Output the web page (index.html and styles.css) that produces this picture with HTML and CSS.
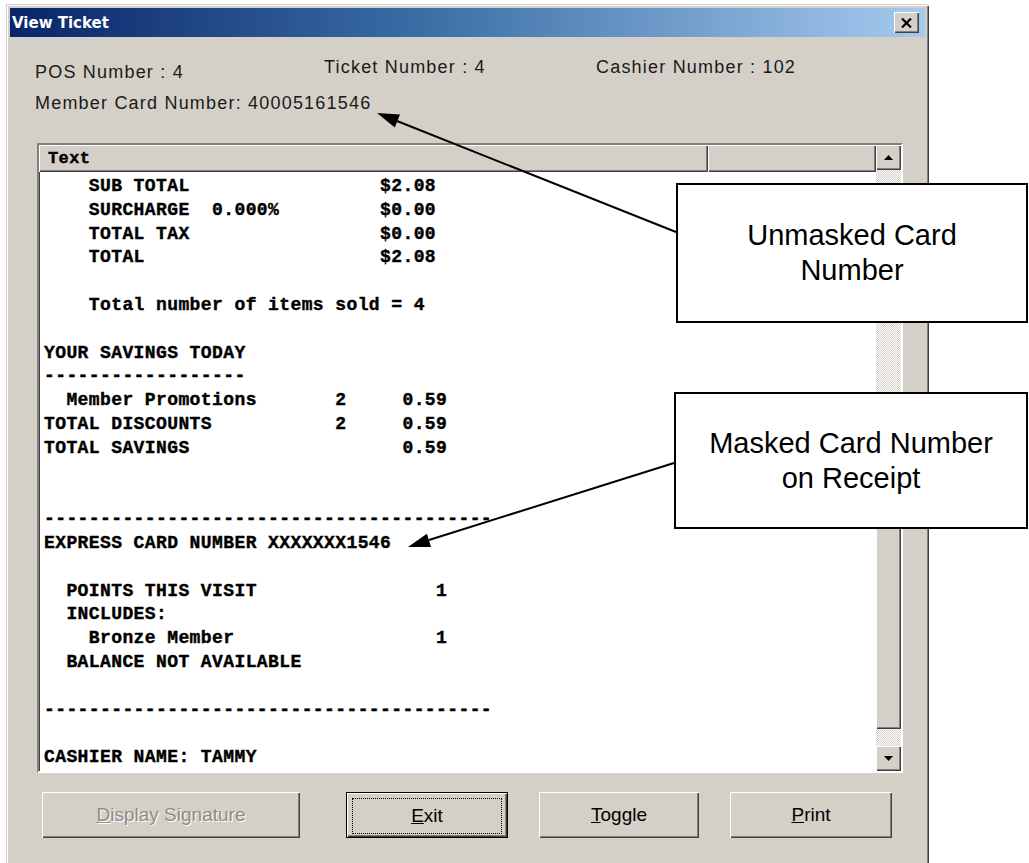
FILE: index.html
```html
<!DOCTYPE html>
<html lang="en">
<head>
<meta charset="utf-8">
<title>View Ticket</title>
<link rel="stylesheet" href="styles.css">
</head>
<body>
<div class="window">
  <div class="titlebar">
    <span class="title">View Ticket</span>
    <span class="close">
      <svg width="11" height="10" viewBox="0 0 11 10"><path d="M1 0.5 L10 9.5 M10 0.5 L1 9.5" stroke="#000" stroke-width="2.2" fill="none"/></svg>
    </span>
  </div>

  <div class="info-row">
    <span class="info pos">POS Number : 4</span>
    <span class="info ticket">Ticket Number : 4</span>
    <span class="info cashier">Cashier Number : 102</span>
  </div>
  <div class="info member">Member Card Number: 40005161546</div>

  <div class="listview">
    <div class="list-main">
      <div class="list-header">
        <div class="col col-text">Text</div>
        <div class="col col-extra"></div>
      </div>
<pre class="receipt">    SUB TOTAL                 $2.08
    SURCHARGE  0.000%         $0.00
    TOTAL TAX                 $0.00
    TOTAL                     $2.08

    Total number of items sold = 4

YOUR SAVINGS TODAY
------------------
  Member Promotions       2     0.59
TOTAL DISCOUNTS           2     0.59
TOTAL SAVINGS                   0.59


----------------------------------------
EXPRESS CARD NUMBER XXXXXXX1546

  POINTS THIS VISIT                1
  INCLUDES:
    Bronze Member                  1
  BALANCE NOT AVAILABLE

----------------------------------------

CASHIER NAME: TAMMY</pre>
    </div>
    <div class="scrollbar">
      <div class="sb-btn">
        <svg width="9" height="5" viewBox="0 0 9 5"><path d="M4.5 0 L9 5 L0 5 Z" fill="#000"/></svg>
      </div>
      <div class="sb-track upper"></div>
      <div class="sb-thumb"></div>
      <div class="sb-track lower"></div>
      <div class="sb-btn">
        <svg width="9" height="5" viewBox="0 0 9 5"><path d="M0 0 L9 0 L4.5 5 Z" fill="#000"/></svg>
      </div>
    </div>
  </div>

  <div class="buttons">
    <button class="btn btn-wide" disabled><u>D</u>isplay Signature</button>
    <button class="btn btn-default"><span class="focus"><u>E</u>xit</span></button>
    <button class="btn btn-toggle"><u>T</u>oggle</button>
    <button class="btn"><u>P</u>rint</button>
  </div>
</div>

<!-- annotation layer: leader arrows and callout boxes -->
<svg class="arrows" width="1029" height="863" viewBox="0 0 1029 863">
  <line x1="676" y1="232" x2="397" y2="121" stroke="#000" stroke-width="2"/>
  <polygon points="377,113 400,114.6 394.8,127.6" fill="#000"/>
  <line x1="674" y1="463" x2="429" y2="540" stroke="#000" stroke-width="2"/>
  <polygon points="408,547 431.1,547.1 426.9,533.7" fill="#000"/>
</svg>
<div class="callout callout-unmasked">Unmasked Card<br>Number</div>
<div class="callout callout-masked">Masked Card Number<br>on Receipt</div>
</body>
</html>
```
FILE: styles.css
```css
* {
  box-sizing: border-box;
}

body {
  margin: 0;
  width: 1029px;
  height: 863px;
  overflow: hidden;
  position: relative;
  background: #fff;
  font-family: "Liberation Sans", Arial, sans-serif;
}

/* dialog frame */
.window {
  margin: 4px 0 0 6px;
  width: 923px;
  height: 900px;
  padding: 4px;
  background: #d4d0c8;
  box-shadow:
    inset 1px 1px #d4d0c8,
    inset 2px 2px #fff,
    inset -1px -1px #404040,
    inset -2px -2px #808080;
}

.titlebar {
  height: 29px;
  display: flex;
  align-items: center;
  justify-content: space-between;
  padding: 0 6px 0 2px;
  background: linear-gradient(to right, #0a246a 0%, #3a6ea5 45%, #a6caf0 100%);
}

.title {
  color: #fff;
  font: bold 15px "DejaVu Sans", Verdana, sans-serif;
}

.close {
  width: 25px;
  height: 21px;
  display: flex;
  align-items: center;
  justify-content: center;
  background: #d4d0c8;
  box-shadow:
    inset 1px 1px #fff,
    inset -1px -1px #404040,
    inset -2px -2px #808080;
}

/* ticket info labels */
.info {
  font-size: 18px;
  line-height: 22px;
  letter-spacing: 1.2px;
  color: #1a1a1a;
}

.info-row {
  display: flex;
  align-items: flex-start;
  height: 22px;
  margin-top: 19px;
  padding-left: 25px;
}

.pos {
  width: 289px;
  padding-top: 5px;
}

.ticket {
  width: 272px;
}

.member {
  margin-top: 14px;
  padding-left: 25px;
}

/* list view with receipt text */
.listview {
  display: flex;
  margin: 29px 0 0 27px;
  width: 866px;
  height: 630px;
  border: 2px solid;
  border-color: #808080 #fff #fff #808080;
  box-shadow: inset 1px 1px #404040;
  background: #fff;
}

.list-main {
  flex: 1;
  min-width: 0;
  display: flex;
  flex-direction: column;
  overflow: hidden;
}

.list-header {
  display: flex;
  height: 27px;
  flex-shrink: 0;
}

.col {
  height: 100%;
  background: #d4d0c8;
  box-shadow:
    inset 1px 1px #fff,
    inset -1px -1px #404040,
    inset -2px -2px #808080;
  font: bold 17px "Liberation Mono", "Courier New", monospace;
  letter-spacing: 0.4px;
  -webkit-text-stroke: 0.4px #000;
  line-height: 27px;
  padding-left: 9px;
  color: #000;
}

.col-text {
  width: 669px;
}

.col-extra {
  flex: 1;
}

.receipt {
  margin: 0;
  padding: 3px 0 0 5px;
  font: bold 18px/23.8px "Liberation Mono", "Courier New", monospace;
  letter-spacing: 0.4px;
  -webkit-text-stroke: 0.4px #000;
  color: #000;
  white-space: pre;
}

/* vertical scroll bar */
.scrollbar {
  width: 25px;
  display: flex;
  flex-direction: column;
  flex-shrink: 0;
}

.sb-btn {
  height: 25px;
  flex-shrink: 0;
  display: flex;
  align-items: center;
  justify-content: center;
  background: #d4d0c8;
  box-shadow:
    inset 1px 1px #fff,
    inset -1px -1px #404040,
    inset -2px -2px #808080;
}

.sb-track {
  background: repeating-conic-gradient(#d4d0c8 0 25%, #fff 0 50%) 0 0 / 2px 2px;
}

.sb-track.upper {
  height: 278px;
}

.sb-track.lower {
  flex: 1;
}

.sb-thumb {
  height: 281px;
  background: #d4d0c8;
  box-shadow:
    inset 1px 1px #fff,
    inset -1px -1px #404040,
    inset -2px -2px #808080;
}

/* command buttons */
.buttons {
  display: flex;
  gap: 31px;
  margin: 19px 0 0 32px;
}

.btn {
  width: 162px;
  height: 46px;
  padding: 0;
  border: 0;
  background: #d4d0c8;
  box-shadow:
    inset 1px 1px #fff,
    inset -1px -1px #404040,
    inset -2px -2px #808080;
  font: 19px "Liberation Sans", Arial, sans-serif;
  color: #000;
}

.btn-wide {
  width: 258px;
  margin-right: 15px;
}

.btn-toggle {
  width: 160px;
}

.btn[disabled] {
  color: #8e8c88;
  text-shadow: 1px 1px #fff;
}

.btn-default {
  border: 1px solid #000;
  padding: 4px;
  box-shadow:
    inset 1px 1px #fff,
    inset -1px -1px #404040,
    inset -2px -2px #808080;
}

.focus {
  display: flex;
  align-items: center;
  justify-content: center;
  height: 100%;
  margin: 1px;
  border: 1px dotted #000;
}

/* annotation layer */
.arrows {
  position: absolute;
  left: 0;
  top: 0;
  pointer-events: none;
}

.callout {
  position: absolute;
  display: flex;
  align-items: center;
  justify-content: center;
  text-align: center;
  background: #fff;
  border: 2px solid #000;
  font: 29px/35px "Liberation Sans", Arial, sans-serif;
  color: #000;
}

.callout-unmasked {
  left: 676px;
  top: 183px;
  width: 352px;
  height: 140px;
}

.callout-masked {
  left: 674px;
  top: 392px;
  width: 354px;
  height: 137px;
}
```
